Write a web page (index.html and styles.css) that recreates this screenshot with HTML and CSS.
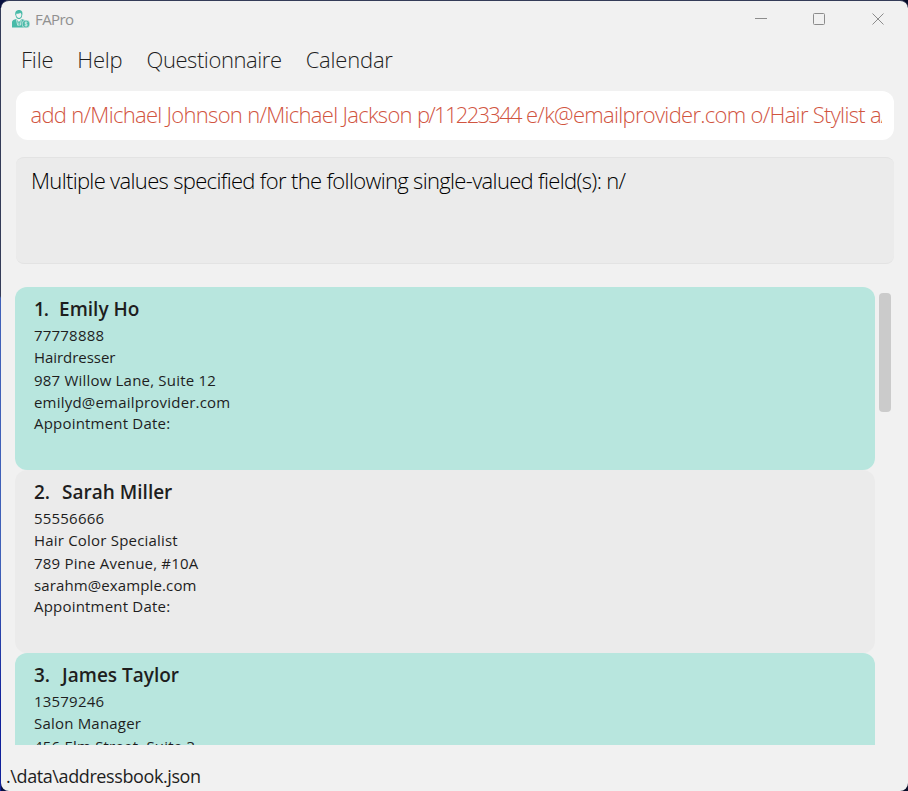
FILE: index.html
```html
<!DOCTYPE html>
<html lang="en"><head><meta charset="utf-8"><title>FAPro</title><link rel="stylesheet" href="styles.css"></head>
<body>
<div class="window">
  <header class="titlebar">
    <svg class="logo" viewBox="0 0 18 18" width="18" height="18">
      <path class="teal" d="M3.200 4.200C3 1 5 0 7 0s3.700 1 3.400 4.200L9.800 7c-.7 1.500-1.700 2-2.900 2S4.700 8.500 4 7z"/>
      <path class="pale" d="M4.200 3.800c2 .1 3.500-.3 4.200-1l1 1.400c.1 2.400-1 3.700-2.600 3.700S4.100 6.300 4.200 3.800z"/>
      <path class="teal" d="M0 17.500V12c0-1.600 2-2.400 4.300-3l2.600 3 2.700-3c2 .5 3.400 1 4 2v6.500z"/>
      <path class="pale-line" d="M4.500 9.500l1.200 6M9.300 9.500l-1 6M6.900 12.500V16"/>
      <circle class="coin" cx="14" cy="14" r="3.900"/>
      <path class="pale-line" d="M15.400 12.600c-.7-.6-2.600-.6-2.600.4 0 1.200 2.600.7 2.600 2 0 1-2 1-2.800.3M14 11.500v5"/>
    </svg>
    <span class="app-name">FAPro</span>
    <svg class="controls" viewBox="0 0 132 14" width="132" height="14"><path d="M1 6.500h12M60.500 1.500h9a1 1 0 0 1 1 1v9a1 1 0 0 1-1 1h-9a1 1 0 0 1-1-1v-9a1 1 0 0 1 1-1zM118.500 1.500l11 11M129.500 1.500l-11 11"/></svg>
  </header>
  <nav class="menu"><span>File</span><span>Help</span><span class="tight">Questionnaire</span><span>Calendar</span></nav>
  <div class="command"><div class="command-text">add n/Michael Johnson n/Michael Jackson <span class="phone">p/11223344</span> e/k@emailprovider.com o/Hair Stylist a/</div></div>
  <div class="result">Multiple values specified for the following single-valued field(s): n/</div>
  <main class="list">
    <div class="cards">
      <article class="card"><h2><span class="num one">1.</span>Emily Ho</h2><p>77778888</p><p class="job">Hairdresser</p><p class="address">987 Willow Lane, Suite 12</p><p>emilyd@emailprovider.com</p><p class="date">Appointment Date:</p></article>
      <article class="card alt"><h2><span class="num">2.</span>Sarah Miller</h2><p>55556666</p><p>Hair Color Specialist</p><p class="address">789 Pine Avenue, #10A</p><p class="mail">sarahm@example.com</p><p class="date">Appointment Date:</p></article>
      <article class="card"><h2><span class="num">3.</span>James Taylor</h2><p>13579246</p><p>Salon Manager</p><p class="address">456 Elm Street, Suite 3</p></article>
    </div>
    <div class="scrollbar"></div>
  </main>
  <footer class="status">.\data\addressbook.json</footer>
</div>
</body></html>
```
FILE: styles.css
```css
* { box-sizing: border-box; }
body { margin: 0; background: linear-gradient(#343c58 0 288px, #3f60b8 290px 560px, #10209a 700px) 0 8px / 1px 783px no-repeat, linear-gradient(90deg, #081040, #070b28); font-family: "Open Sans", sans-serif; color: #1e1e1e; white-space: nowrap; }
.window { height: 791px; margin-left: 1px; border-top: 1px solid #343c58; background: #f1f1f1; border-radius: 8px; display: flex; flex-direction: column; overflow: hidden; }
.window > * { flex-shrink: 0; }
.titlebar { height: 36px; display: flex; align-items: center; padding: 0 22px 0 11px; }
.app-name { margin-left: 5px; font-size: 15px; letter-spacing: -.6px; color: #909090; }
.controls { margin-left: auto; fill: none; stroke: #8c8c8c; }
.teal, .coin { fill: #48baa8; }
.coin { stroke: #f1f1f1; stroke-width: .6; }
.pale { fill: #f1f1f1; }
.pale-line { fill: none; stroke: #e4f1ef; stroke-width: .8; }
.menu { display: flex; gap: 24px; padding: 0 0 10px 20px; height: 54px; align-items: center; font-size: 22px; font-weight: 300; letter-spacing: -.2px; }
.tight { letter-spacing: -.42px; }
.command { height: 49px; margin: 0 14px 0 15px; border-radius: 12px; background: #fff; padding: 0 12px 0 14.500px; font-size: 22px; font-weight: 300; letter-spacing: -.7px; color: #d1553f; line-height: 47px; }
.command-text { overflow: hidden; }
.phone { letter-spacing: -1.7px; }
.result { height: 107px; margin: 17px 14px 0 15px; background: #ebebeb; border: solid #e3e3e3; border-width: 1px 0; border-radius: 8px; padding: 0 15px; font-size: 22px; font-weight: 300; letter-spacing: -.67px; line-height: 44px; color: #000; }
.list { display: flex; margin: 23px 0 0 14px; height: 458px; overflow: hidden; }
.cards { width: 860px; }
.card { height: 183px; border-radius: 12px; background: #b8e6de; padding: 8px 19px; }
.alt { background: #ebebeb; }
h2 { margin: 0; font-size: 19px; line-height: 28px; font-weight: 600; }
.num { margin-right: 12px; }
.one { letter-spacing: -1px; margin-right: 11px; }
p { margin: 0; font-size: 15px; line-height: 22px; letter-spacing: .2px; padding-top: 1px; margin-bottom: -1px; }
.address { padding-top: 2px; margin-bottom: -1px; letter-spacing: .2px; }
.date { padding-top: 0; }
.job { letter-spacing: -.05px; }
.mail { letter-spacing: .12px; }
.scrollbar { width: 12px; height: 119px; margin: 6px 0 0 4px; background: #cbcbcb; border-radius: 4px; }
.status { padding: 15px 0 0 5px; font-size: 18px; letter-spacing: -.4px; line-height: 32px; }
```
